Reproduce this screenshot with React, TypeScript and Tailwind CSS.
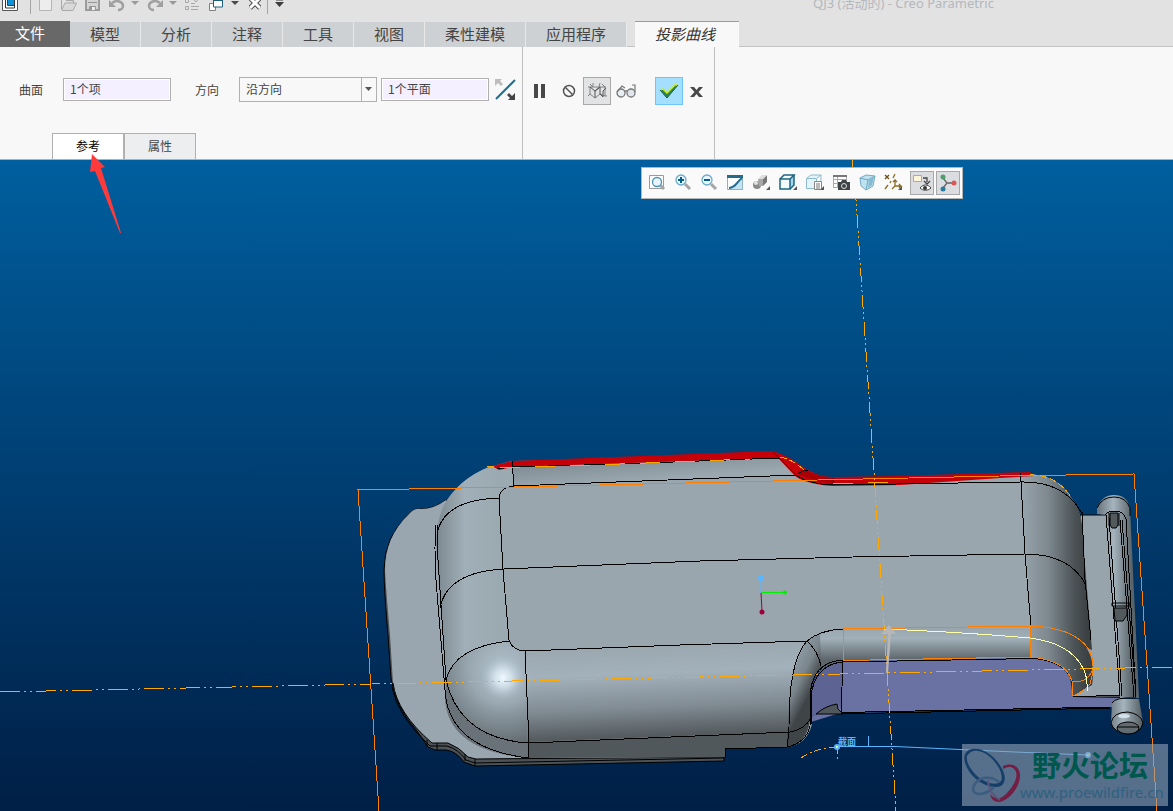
import { useState } from "react";
import type { ReactNode } from "react";

const FONT = "font-['Noto_Sans_CJK_SC','Open_Sans',sans-serif]";

type IconProps = {
    w?: number;
    h?: number;
    children: ReactNode;
};

function Icon({ w = 18, h = 18, children }: IconProps) {
    return (
        <svg
            width={w}
            height={h}
            viewBox={`0 0 ${w} ${h}`}
            fill="none"
            className="shrink-0"
            aria-hidden="true"
        >
            {children}
        </svg>
    );
}

function QuickButton({
    label,
    className = "",
    children,
}: {
    label: string;
    className?: string;
    children: ReactNode;
}) {
    return (
        <button type="button" aria-label={label} className={`block ${className}`}>
            {children}
        </button>
    );
}

function DropMark({ label, className = "", color = "#9a9a9a" }: { label: string; className?: string; color?: string }) {
    return (
        <QuickButton label={label} className={className}>
            <Icon w={8} h={14}>
                <path d="M0 1h8L4 5z" fill={color} />
            </Icon>
        </QuickButton>
    );
}

function TitleBar() {
    return (
        <header className="relative flex h-[21px] items-start overflow-hidden pl-0.5">
            <QuickButton label="窗口">
                <Icon w={16} h={14}>
                    <path d="M.5-3v13.500h15V-3" fill="#fff" stroke="#555" />
                    <path d="M3.500-1v9h9v-9" fill="#fff" stroke="#333" />
                    <path d="M6 0h6v5H6z" fill="#0f93d6" />
                    <path d="M5.500 0v5.500H12" stroke="#0b4f78" />
                </Icon>
            </QuickButton>
            <div className="ml-3 h-[14px] w-px bg-[#a5a5a5]" />
            <QuickButton label="新建" className="ml-2">
                <Icon w={14} h={14}>
                    <path d="M.5-3v13.500h12V-3" fill="#ededed" stroke="#b5b5b5" />
                </Icon>
            </QuickButton>
            <QuickButton label="打开" className="ml-2">
                <Icon w={16} h={14}>
                    <path d="M.5-1v11L4 3h11.500L12 10.500H1M12.500 3V.5H5" fill="#d9d9d9" stroke="#a9a9a9" />
                </Icon>
            </QuickButton>
            <QuickButton label="保存" className="ml-2">
                <Icon w={16} h={14}>
                    <path d="M1-1v11h13V-1" fill="#d4d4d4" stroke="#9c9c9c" strokeWidth="2" />
                    <path d="M4.500 10V6.500h6V10M3 2.500h9" stroke="#959595" fill="#ececec" />
                    <path d="M5 7h2v3H5z" fill="#999" />
                </Icon>
            </QuickButton>
            <QuickButton label="撤消" className="ml-2">
                <Icon w={16} h={14}>
                    <path d="M3 3c5-4 11-1 11 3 0 2-2 4-5 4" stroke="#a0a0a0" strokeWidth="2.500" />
                    <path d="M0 0v7h7z" fill="#a0a0a0" />
                </Icon>
            </QuickButton>
            <DropMark label="撤消列表" className="ml-1.5" />
            <QuickButton label="重做" className="ml-2">
                <Icon w={16} h={14}>
                    <path d="M13 3C8-1 2 2 2 6c0 2 2 4 5 4" stroke="#a0a0a0" strokeWidth="2.500" />
                    <path d="M16 0v7H9z" fill="#a0a0a0" />
                </Icon>
            </QuickButton>
            <DropMark label="重做列表" className="ml-1.5" />
            <QuickButton label="重新生成" className="ml-2">
                <Icon w={16} h={14}>
                    <path d="M.5-.5h3v3h-3zM.5 6.500h3v3h-3z" stroke="#a8a8a8" />
                    <path d="M6 3.500h4M6 6.500h8M6 9.500h7M9 0l2 2 4-5" stroke="#a8a8a8" />
                </Icon>
            </QuickButton>
            <QuickButton label="切换窗口" className="ml-2">
                <Icon w={16} h={14}>
                    <path d="M.5 3.500h6v7h-6z" fill="#fff" stroke="#808080" />
                    <path d="M4.500-1v8h9v-8" fill="#fff" stroke="#1f5f7e" />
                    <path d="M5 0h8" stroke="#1f5f7e" strokeWidth="2" />
                    <path d="M13.500 0v4" stroke="#1f5f7e" />
                </Icon>
            </QuickButton>
            <DropMark label="窗口列表" className="ml-1.5" color="#4a4a4a" />
            <QuickButton label="关闭" className="ml-2.5">
                <Icon w={12} h={14}>
                    <path d="M1 8 11-2M1-2 11 8" stroke="#4f4f4f" strokeWidth="5" />
                    <path d="M1 8 11-2M1-2 11 8" stroke="#fff" strokeWidth="3" />
                </Icon>
            </QuickButton>
            <div className="ml-1.5 h-[14px] w-px bg-[#a5a5a5]" />
            <QuickButton label="自定义" className="ml-[7px]">
                <Icon w={9} h={14}>
                    <path d="M1-1h7v1.500H1zM0 2h9L4.500 7z" fill="#3c3c3c" />
                </Icon>
            </QuickButton>
            <h1 className="absolute -top-[7px] left-[813px] text-[13px] leading-5 text-[#b3b8bd] font-['Noto_Sans','Noto_Sans_CJK_SC',sans-serif] whitespace-nowrap">
                QJ3 (活动的) - Creo Parametric
            </h1>
        </header>
    );
}

const TABS = [
    { label: "模型", wide: false },
    { label: "分析", wide: false },
    { label: "注释", wide: false },
    { label: "工具", wide: false },
    { label: "视图", wide: false },
    { label: "柔性建模", wide: true },
    { label: "应用程序", wide: true },
];

function MenuTabs() {
    return (
        <nav className="flex h-[26px] items-stretch text-[15px] leading-6 text-[#444]">
            <button type="button" className="w-[70px] bg-[#686868] pr-2.5 pb-0.5 text-white">
                文件
            </button>
            {TABS.map((t) => (
                <button
                    key={t.label}
                    type="button"
                    className={`mt-px border-r border-[#e8e8e8] bg-[#cdd1d4] pb-[3px] ${t.wide ? "w-[101px]" : "w-[71px]"}`}
                >
                    {t.label}
                </button>
            ))}
            <div className="w-2 border-b border-[#c3c3c3]" />
            <button
                type="button"
                className="w-[104px] border-t border-[#9a9a9a] bg-[#f8f8f8] pr-1 pb-[3px] text-[#333] italic"
            >
                投影曲线
            </button>
            <div className="flex-1 border-b border-[#c3c3c3]" />
        </nav>
    );
}

function Collector({ label, value }: { label: string; value: string }) {
    return (
        <input
            aria-label={label}
            defaultValue={value}
            className="block h-[23px] w-[108px] border border-[#b0b0b0] bg-[#f4f0ff] px-1.5 pb-0.5 text-[12px] text-[#444] shadow-[inset_0_0_0_1px_#fff] outline-none"
        />
    );
}

function Ribbon() {
    const [tab, setTab] = useState("参考");
    const [direction, setDirection] = useState("沿方向");

    return (
        <section className="flex h-[113px] border-b border-[#b0b0b0] bg-[#f8f8f8] text-[12px] text-[#444]">
            <div className="flex w-[523px] flex-col justify-between border-r border-[#c0c0c0] pt-[30px]">
                <div className="flex h-[25px] items-center pl-[19px]">
                    <span className="w-11">曲面</span>
                    <Collector label="曲面" value="1个项" />
                    <label htmlFor="direction" className="ml-6 w-11">
                        方向
                    </label>
                    <div className="relative h-[25px] w-[138px]">
                        <select
                            id="direction"
                            value={direction}
                            onChange={(e) => setDirection(e.target.value)}
                            className="block h-full w-full appearance-none border border-[#b0b0b0] bg-[#f8f8f8] pb-0.5 pl-1.5 outline-none"
                        >
                            <option>沿方向</option>
                            <option>垂直于曲面</option>
                        </select>
                        <div className="pointer-events-none absolute inset-y-0 right-0 flex w-4 items-center justify-center border-l border-[#b0b0b0] pr-px">
                            <Icon w={8} h={5}>
                                <path d="M0 0h7L3.500 4z" fill="#555" />
                            </Icon>
                        </div>
                    </div>
                    <div className="ml-1">
                        <Collector label="方向参考" value="1个平面" />
                    </div>
                    <button type="button" aria-label="反向" className="ml-1.5">
                        <Icon w={21} h={21}>
                            <path d="M1 20 20 1" stroke="#1f6f8f" strokeWidth="2" />
                            <path d="M0 0h7L5 2l3 3-2 2-3-3-3 3z" fill="#bdbdbd" />
                            <path d="M20 21h-7l2-2-3-3 2-2 3 3 3-3z" fill="#444" />
                        </Icon>
                    </button>
                </div>
                <div className="ml-[52px] flex h-[26px]">
                    {["参考", "属性"].map((t) => (
                        <button
                            key={t}
                            type="button"
                            onClick={() => setTab(t)}
                            className={`w-[72px] border border-b-0 border-[#b0b0b0] pb-0.5 ${
                                tab === t ? "bg-white text-black" : "bg-[#eceef0] text-[#444]"
                            }`}
                        >
                            {t}
                        </button>
                    ))}
                </div>
            </div>
            <div className="flex w-48 items-start border-r border-[#c0c0c0] pt-[30px]">
                <div className="flex h-7 items-center pl-[11px]">
                    <button type="button" aria-label="暂停">
                        <Icon w={12} h={14}>
                            <path d="M0 0h4v14H0zM7 0h4v14H7z" fill="#484848" />
                        </Icon>
                    </button>
                    <button type="button" aria-label="无预览" className="ml-4">
                        <Icon w={14} h={14}>
                            <circle cx="7" cy="7" r="5.500" stroke="#555" strokeWidth="1.500" />
                            <path d="m3.500 3.500 7 7" stroke="#555" strokeWidth="1.500" />
                        </Icon>
                    </button>
                    <button
                        type="button"
                        aria-label="分离预览"
                        className="ml-[7px] flex size-7 items-center justify-center border border-[#a8a8a8] bg-[#e2e3e4]"
                    >
                        <Icon w={20} h={20}>
                            <path
                                d="M1 6h6M6 2v3M3 6v7l-2 2M3 13l5 4M13 6h6M13 2l-1 4M18 6v9l-5-2M18 15h2M8 17l5-4M7 6h5M15 3l3 3M3 3l3 3"
                                stroke="#808080"
                            />
                            <path d="M3 6l5 4v7M8 10l5-4v7M13 6l-5 4M13 13l3 3v-6l3-3" stroke="#555" />
                        </Icon>
                    </button>
                    <button type="button" aria-label="预览" className="ml-[5px]">
                        <Icon w={20} h={16}>
                            <circle cx="5" cy="10" r="4" fill="#e8eef2" stroke="#777" strokeWidth="1.300" />
                            <circle cx="15" cy="10" r="4" fill="#dfe7ec" stroke="#777" strokeWidth="1.300" />
                            <path d="M9 9c0-2 2-2 2 0M1 9l5-6 3 2M19 9V2h-3" stroke="#777" strokeWidth="1.200" />
                        </Icon>
                    </button>
                    <button
                        type="button"
                        aria-label="确定"
                        className="ml-[19px] flex size-7 items-center justify-center border border-[#6ec6f5] bg-[#a5dfff]"
                    >
                        <Icon w={20} h={16}>
                            <path d="M1 7l3-1 4 4 8-8h3L8 15z" fill="#2c8457" />
                            <path d="m1 7 3-1 4 4 8-8h3" stroke="#d0f000" strokeWidth="1.500" />
                            <path d="m1 7 7 8L19 2" stroke="#23603f" strokeWidth="1" />
                        </Icon>
                    </button>
                    <button type="button" aria-label="取消" className="mt-0.5 ml-[7px]">
                        <Icon w={13} h={12}>
                            <path d="M0 1h4l2.500 3L9 1h4L8.500 6l4.500 5H9L6.500 8 4 11H0l4.500-5z" fill="#484848" />
                        </Icon>
                    </button>
                </div>
            </div>
        </section>
    );
}

const CORNER = <path d="M19 14v4h-4z" fill="#555" />;

function ViewToolbar() {
    const button = "flex h-6 w-[26px] items-center justify-center pb-0.5";
    const pressed = "flex size-6 items-center justify-center border border-[#a8a8a8] bg-[#dcdde0]";
    return (
        <div
            role="toolbar"
            aria-label="视图工具栏"
            className="absolute top-[7px] left-[641px] flex h-8 items-center border border-[#b5b5b5] bg-[#fafafa] px-0.5"
        >
            <button type="button" aria-label="重新调整" className={button}>
                <Icon w={20} h={20}>
                    <path d="M2.500 3.500h14v13h-14z" fill="#fff" stroke="#9b9b9b" />
                    <path d="m13 13 4 4" stroke="#a5a5a5" strokeWidth="3" />
                    <circle cx="10" cy="10" r="4.500" fill="#e9f6ff" stroke="#4d93b3" strokeWidth="1.300" />
                </Icon>
            </button>
            <button type="button" aria-label="放大" className={button}>
                <Icon w={20} h={20}>
                    <path d="m12 12 5 5" stroke="#a5a5a5" strokeWidth="3" />
                    <circle cx="8" cy="8" r="5" fill="#e9f6ff" stroke="#6fabc6" strokeWidth="1.300" />
                    <path d="M5 8h6M8 5v6" stroke="#00608b" strokeWidth="2" />
                </Icon>
            </button>
            <button type="button" aria-label="缩小" className={button}>
                <Icon w={20} h={20}>
                    <path d="m12 12 5 5" stroke="#a5a5a5" strokeWidth="3" />
                    <circle cx="8" cy="8" r="5" fill="#e9f6ff" stroke="#6fabc6" strokeWidth="1.300" />
                    <path d="M5 8h6" stroke="#00608b" strokeWidth="2" />
                </Icon>
            </button>
            <button type="button" aria-label="重画" className={button}>
                <Icon w={20} h={20}>
                    <path d="M2.500 3.500h15v14h-15z" fill="#c2e4f3" stroke="#8db1c3" />
                    <path d="M3 5h13C11 11 10 16 3 17z" fill="#fff" />
                    <path d="M2 4.500h16" stroke="#246b8c" strokeWidth="3" />
                    <path d="M4 16c8-1 7-6 13-10" stroke="#246b8c" strokeWidth="2" />
                </Icon>
            </button>
            <button type="button" aria-label="渲染" className={button}>
                <Icon w={20} h={20}>
                    <circle cx="6" cy="13" r="4" fill="#8a8a8a" />
                    <path d="M12 7l4-4v7l-4 4z" fill="#777" />
                    <path d="M7 7h5v7H8z" fill="#a8a8a8" />
                    <path d="M7 7l4-4h5l-4 4z" fill="#ddd" />
                    <circle cx="5" cy="11" r="2" fill="#e2e2e2" />
                    {CORNER}
                </Icon>
            </button>
            <button type="button" aria-label="显示样式" className={`ml-px ${button}`}>
                <Icon w={20} h={20}>
                    <path d="M12 7l4-4v10l-4 4z" fill="#a9d5e8" />
                    <path d="M2 7h10v10H2zM2 7l4-4h10l-4 4" fill="#f4fbff" stroke="#1d6683" strokeWidth="1.500" />
                    <path d="M16 3v10l-4 4" stroke="#1d6683" strokeWidth="1.500" />
                    {CORNER}
                </Icon>
            </button>
            <button type="button" aria-label="已保存方向" className={`ml-px ${button}`}>
                <Icon w={20} h={20}>
                    <path d="M1.500 6.500h10v10h-10zM2 6l4-3h10l-4 3M16 3v9" fill="#e4f4fb" stroke="#8fbccd" />
                    <path d="M9.500 9.500h7v8h-7z" fill="#fff" stroke="#888" />
                    <path d="M11 12h4M11 14h4M11 16h4" stroke="#777" />
                    {CORNER}
                </Icon>
            </button>
            <button type="button" aria-label="视图管理器" className={button}>
                <Icon w={20} h={20}>
                    <path d="M2.500 3.500h13v12h-13zM2 7.500h13M2 11.500h13M6.500 4v12" fill="#fff" stroke="#aaa" />
                    <path d="M2 4h14" stroke="#777" strokeWidth="2" />
                    <path d="M7 10h3l1-2h4l1 2h3v8H7z" fill="#3f4447" />
                    <circle cx="13" cy="14" r="2.500" stroke="#ddd" />
                </Icon>
            </button>
            <button type="button" aria-label="透视图" className={button}>
                <Icon w={20} h={20}>
                    <path d="M3 6l6-3 9 1-2 10-7 4-5-4z" fill="#bfe2f0" stroke="#7aa9bf" />
                    <path d="m3 6 8 2 7-4M11 8l-2 10" stroke="#6aa9c3" />
                    <path d="m12 8 5-3-2 8-4 3z" fill="#86bcd2" />
                </Icon>
            </button>
            <button type="button" aria-label="基准显示" className={button}>
                <Icon w={20} h={20}>
                    <path d="m2 3 4 4M6 3 2 7" stroke="#6a5319" strokeWidth="1.300" />
                    <path d="m12 2-2 4M8 9l-1 2M5 13l-3 4M12 9v5l-3 3M12 14h6l-2-2m2 2-2 2M10 10l2-2 2 2" stroke="#8d6b20" strokeWidth="1.300" />
                    {CORNER}
                </Icon>
            </button>
            <button type="button" aria-label="注释显示" className={`ml-1 ${pressed}`}>
                <Icon w={20} h={20}>
                    <path d="M1.500 2.500h8v6h-8z" fill="#fff4dc" stroke="#b6a992" />
                    <path d="M11 5h4v4m-3-1 3 3 3-3" stroke="#444" strokeWidth="1.300" />
                    <path d="M8 15c3-4 8-4 11 0-3 3-8 3-11 0z" fill="#fff" stroke="#444" />
                    <circle cx="13" cy="15" r="2" fill="#333" />
                </Icon>
            </button>
            <button type="button" aria-label="旋转中心" className={`ml-0.5 ${pressed}`}>
                <Icon w={20} h={20}>
                    <path d="m5 5 4 5h7M9 10l-4 5" stroke="#666" strokeWidth="1.300" />
                    <circle cx="5" cy="4" r="2.500" fill="#4f9e6c" />
                    <circle cx="16" cy="10" r="2.500" fill="#d85757" />
                    <circle cx="5" cy="16" r="2.500" fill="#287b9e" />
                </Icon>
            </button>
        </div>
    );
}

function Model() {
    return (
        <svg
            viewBox="0 160 1173 651"
            preserveAspectRatio="xMinYMin slice"
            className="absolute inset-0 size-full overflow-visible"
            fill="none"
            role="img"
            aria-label="QJ3"
        >
            <defs>
                <linearGradient id="left" x1="435" y1="0" x2="500" y2="0" gradientUnits="userSpaceOnUse">
                    <stop offset="0" stopColor="#7a868d" />
                    <stop offset=".45" stopColor="#a1afb8" />
                    <stop offset="1" stopColor="#9ba9b1" />
                </linearGradient>
                <linearGradient id="top" x1="600" y1="458" x2="602" y2="484" gradientUnits="userSpaceOnUse">
                    <stop offset="0" stopColor="#7f8b92" />
                    <stop offset="1" stopColor="#9ba8b0" />
                </linearGradient>
                <linearGradient id="front" x1="660" y1="644" x2="664" y2="740" gradientUnits="userSpaceOnUse">
                    <stop offset="0" stopColor="#9aa7af" />
                    <stop offset=".3" stopColor="#a3b1bb" />
                    <stop offset=".65" stopColor="#818c94" />
                    <stop offset="1" stopColor="#4d5356" />
                </linearGradient>
                <linearGradient id="right" x1="1022" y1="0" x2="1088" y2="0" gradientUnits="userSpaceOnUse">
                    <stop offset="0" stopColor="#98a4ac" />
                    <stop offset=".4" stopColor="#7d888f" />
                    <stop offset=".8" stopColor="#4b5255" />
                    <stop offset="1" stopColor="#3b4042" />
                </linearGradient>
                <linearGradient id="lip" x1="0" y1="627" x2="0" y2="660" gradientUnits="userSpaceOnUse">
                    <stop offset="0" stopColor="#97a4ac" />
                    <stop offset=".35" stopColor="#a1b0b9" />
                    <stop offset="1" stopColor="#5c6469" />
                </linearGradient>
                <linearGradient id="bend" x1="788" y1="670" x2="815" y2="684" gradientUnits="userSpaceOnUse">
                    <stop offset="0" stopColor="#8f9ca4" />
                    <stop offset=".5" stopColor="#7a858c" />
                    <stop offset="1" stopColor="#3f4446" />
                </linearGradient>
                <radialGradient id="shine" cx="503" cy="678" r="36" gradientUnits="userSpaceOnUse">
                    <stop offset="0" stopColor="#f0faff" />
                    <stop offset=".25" stopColor="#d5e4ee" stopOpacity=".85" />
                    <stop offset=".6" stopColor="#a9b9c4" stopOpacity=".3" />
                    <stop offset="1" stopColor="#9caab3" stopOpacity="0" />
                </radialGradient>
                <radialGradient id="ball" cx="503" cy="668" r="88" gradientUnits="userSpaceOnUse">
                    <stop offset="0" stopColor="#b0c0ca" />
                    <stop offset=".4" stopColor="#98a6af" />
                    <stop offset=".8" stopColor="#6b757b" />
                    <stop offset="1" stopColor="#535b5f" />
                </radialGradient>
                <linearGradient id="rod" x1="1098" y1="0" x2="1132" y2="0" gradientUnits="userSpaceOnUse">
                    <stop offset="0" stopColor="#6c787f" />
                    <stop offset=".45" stopColor="#a5b4be" />
                    <stop offset="1" stopColor="#596368" />
                </linearGradient>
                <linearGradient id="knob" x1="1110" y1="0" x2="1144" y2="0" gradientUnits="userSpaceOnUse">
                    <stop offset="0" stopColor="#717d84" />
                    <stop offset=".4" stopColor="#a5b4be" />
                    <stop offset="1" stopColor="#4d5559" />
                </linearGradient>
            </defs>

            {/* base plate */}
            <path
                d="M446 500Q434 509 421 509Q414 508 409 514Q384 537 384 570Q384 590 388 635L391 678Q394 705 417 731L428 747L435 750H446Q456 751 464 762L475 766L724 761V750L500 690Z"
                fill="#4c5255"
                stroke="#000"
            />
            <path
                d="M446 500Q434 509 421 509Q414 508 409 514Q385 537 385 570Q386 590 390 635L393 683Q397 713 432 743H448Q459 747 468 757L476 759L530 758L500 680Z"
                fill="#9aa6af"
            />
            <path
                d="M393 683Q397 713 432 743H448Q459 747 468 757L476 759L724 757M392 687Q397 716 430 746H447Q458 749 466 760L475 763L724 758M427 740v7M437 743v7M465 754v7M475 759v7"
                stroke="#000"
            />
            {/* rear plate on the right */}
            <path d="M1080 515h28l13 182h-48z" fill="#98a4ac" stroke="#000" />

            {/* housing silhouette */}
            <path
                d="M436 545Q436 522 444 505Q459 479 489 467L497 465L512 461L773 457Q785 456 794 467Q806 483 833 484L1026 474Q1055 474 1070 496Q1083 512 1083 540L1092 660V690L1073 697V680Q1066 660 1035 658L843 661Q818 664 812 684V724Q807 744 788 747L725 749V757L528 758Q457 749 446 700Z"
                fill="#99a6ae"
            />
            <path d="M436 545Q436 522 444 505Q459 479 489 467L512 465L514 486Q500 487 499 498L509 640L446 675Z" fill="url(#left)" />
            <path d="M512 464L775 457L796 475L514 486Z" fill="url(#top)" />
            <path d="M524 651L807 641Q790 665 789 732L528 742Z" fill="url(#front)" />
            <path d="M528 742L789 732L787 747L725 749V757L528 758Z" fill="#51585b" />
            <path d="M446 680Q454 647 509 641Q513 650 524 651L528 743Q462 739 446 680Z" fill="url(#ball)" />
            <path d="M446 680Q462 739 528 743V758Q449 751 445 700Z" fill="#687278" />
            <circle cx="500" cy="680" r="42" fill="url(#shine)" />
            <path d="M1021 475Q1058 473 1071 497Q1083 512 1083 540L1092 650L1031 627Z" fill="url(#right)" />
            <path d="M843 629L1030 627V657L843 661Z" fill="url(#lip)" />
            <path d="M1030 627Q1070 627 1085 646Q1096 660 1092 685L1073 696V680Q1064 660 1030 657Z" fill="url(#right)" />
            <path
                d="M807 641Q820 630 843 629V661Q818 663 812 684L810 720Q807 744 787 747Q788 665 807 641Z"
                fill="url(#bend)"
            />
            <path d="M820 634Q830 629 843 629V661Q828 662 821 667Z" fill="url(#lip)" />

            {/* pocket */}
            <path d="M843 661L1034 658Q1061 662 1070 677L1073 697L1121 698L1115 707L840 713L811 722V690Q818 663 843 661Z" fill="#6a72a3" />
            <path d="M811 690Q818 663 843 661L841 709L838 704L811 718Z" fill="#5d6493" />
            <path d="M816 714Q825 706 837 704L838 709L843 714Z" fill="#51585b" stroke="#000" />
            <path d="M1073 697l47-2M841 712.500L1111 707M841 714L1111 708M843 661L841 713M811 725L812 690Q818 664 843 662L1034 658.500Q1064 661 1072 680" stroke="#000" shapeRendering="crispEdges" />

            {/* highlighted red faces */}
            <path
                d="M492 466L512 461L773 451Q789 456 803 467Q818 477 833 477L900 476L1030 472L1034 476L1000 478L900 485L833 486Q806 484 795 476L778 458L512 467L499 470Z"
                fill="#c50008"
            />
            <path d="M803 469Q818 477 833 478L833 483Q808 480 797 473Z" fill="#a90006" />

            {/* housing edges */}
            <g stroke="#000" shapeRendering="crispEdges">
                <path d="M512 461L514 486M497 469L512 467L620 464L779 458M773 452L796 475M798 474Q803 470 808 470M833 478v7M1020 473L1021 482" />
                <path d="M514 486L796 475Q808 484 833 485L1021 482Q1065 481 1082 514" />
                <path d="M514 486Q500 487 499 498L503 570L509 640Q513 651 525 651L680 645L807 641" />
                <path d="M438 530Q446 500 499 498M440 608Q447 572 504 569L700 561L853 557L1025 554Q1070 554 1086 585M446 680Q454 647 509 641" />
                <path d="M436 525Q434 545 436 580L445 690Q448 748 528 758L529 743L525 651M438 525L437 545L446 680Q460 739 529 743L790 732Q804 730 811 718" />
                <path d="M1021 482L1025 554L1031 627M1082 512L1085 580L1091 640" />
                <path d="M807 641Q820 630 843 629M807 641Q818 651 821 666M807 641Q788 661 789 732L787 747Q806 743 810 726" />
                <path d="M810 724V700Q810 662 843 660M725 757V749L787 747" />
            </g>

            {/* hinge rod */}
            <path d="M1097 514V508Q1102 495 1114 495Q1127 495 1130 508L1139 698H1120L1107 515Z" fill="url(#rod)" />
            <path d="M1097 508Q1102 497 1114 497Q1126 497 1130 508L1130 516" stroke="#000" />
            <path
                d="M1106 515L1120 696M1109 518L1122 696M1105 515Q1108 511 1114 511Q1124 511 1126 519L1136 697M1120 520L1134 697M1122 520L1136 697"
                stroke="#000"
                shapeRendering="crispEdges"
            />
            <path d="M1110 513h8v12l-2 3h-4l-2-3zM1114 608h13v7l-4 6h-8z" fill="#525a5e" stroke="#000" />
            <path d="M1112 603h18v3h-18zM1109 513v13M1119 513v13" stroke="#000" />
            <path d="M1112 703Q1115 697 1125 699H1139L1143 722Q1142 732 1128 734Q1113 732 1111 723Z" fill="url(#knob)" />
            <path d="M1111 723Q1113 712 1128 712Q1141 714 1143 723Q1141 733 1128 734Q1113 732 1111 723ZM1112 703Q1115 697 1136 698" stroke="#000" />
            <ellipse cx="1128" cy="728" rx="11" ry="6" fill="#626b70" stroke="#000" />
            <path d="M1117 727h22" stroke="#000" />
            <ellipse cx="1124" cy="716" rx="6" ry="2" fill="#d4e0e8" />

            {/* datum plane and picked surface */}
            <g stroke="#ff8000" shapeRendering="crispEdges">
                <path d="M379 811L358 490L514 487L795 480.500L1000 476L1134 474L1157 811" />
                <path d="M843 629V661M843 629L1030 626V657L843 660.500M1030 626Q1072 627 1088 648Q1097 663 1090 684Q1083 692 1073 696L1072 681Q1088 684 1093 668" />
                <path d="M1030 657Q1066 660 1072 681" />
            </g>

            {/* datum axes */}
            <g stroke="#ffa800" shapeRendering="crispEdges">
                <path d="M852 160L856 200L884 625L896 811" strokeDasharray="14 3 2 3 2 3" />
                <path d="M0 692L372 684L887 673L1173 667" strokeDasharray="20 4 2 4 2 4" />
                <path d="M487 467L494 466M780 457Q792 459 804 470M1030 475Q1055 474 1071 497" strokeDasharray="7 3" />
                <path d="M500 468L620 464L750 459M833 484L900 482" strokeDasharray="20 15" />
                <path d="M801 758Q815 748 837 747M837 747V762" strokeDasharray="7 3 2 3" />
            </g>
            <path d="M884 629Q960 632 1030 638Q1070 643 1083 668Q1088 678 1087 691" stroke="#ffffa8" shapeRendering="crispEdges" />
            <path d="M886 673L888 634H881L889 625L896 634L891 634L888 673Z" fill="#b7b7b7" />

            {/* spin center */}
            <path d="M761 579V593" stroke="#58b6ff" />
            <path d="M761 592.500H785" stroke="#00f000" />
            <path d="M761 593L762 611" stroke="#a0003c" />
            <circle cx="761" cy="578" r="3" fill="#58b6ff" />
            <circle cx="785" cy="592.500" r="2" fill="#00f000" />
            <circle cx="762" cy="612" r="2.500" fill="#a0003c" />

            {/* sketched curve */}
            <path d="M837 746.500H895L1015 752L1088 755M868.500 736V746" stroke="#58b6ff" />
            <circle cx="837" cy="747" r="3" fill="#58b6ff" />
            <circle cx="837" cy="747" r="1" fill="#ffff70" />
            <circle cx="1088" cy="755" r="3" fill="#58b6ff" />
            <circle cx="1088" cy="755" r="1" fill="#ffff70" />
            <text x="838" y="745" fontSize="9" fontWeight="700" fill="#58b6ff">
                截面
            </text>

            {/* pointer */}
            <path d="M92 154L105 167L101 168L121 233L120 233L95 171L90 172Z" fill="#ff3a3a" />
        </svg>
    );
}

function Watermark() {
    return (
        <div className="absolute right-[5px] bottom-[5px] flex h-[62px] w-[206px] bg-[#8fa3b8]/60">
            <svg width="60" height="62" viewBox="0 0 60 62" fill="none" className="shrink-0" aria-hidden="true">
                <path
                    fillRule="evenodd"
                    d="M3 10C7 2 22 3 33 15C43 26 46 37 39 42C32 45 18 41 9 30C3 22 1 15 3 10ZM5 12C4 18 8 25 14 31C24 40 35 42 39 37C42 31 36 20 28 13C19 5 9 5 5 12Z"
                    fill="#173e69"
                />
                <path
                    fillRule="evenodd"
                    d="M41 22C50 18 57 22 58 30C59 42 47 57 37 58C31 58 29 54 28 50C33 56 39 56 45 49C54 40 57 29 52 25C49 22 45 23 41 25Z"
                    fill="#731f44"
                />
                <path d="M37 38C29 31 17 33 13 40C9 46 12 50 17 50C23 50 29 46 32 43" stroke="#3c5c80" strokeWidth="2.500" />
                <path d="M26 36Q26 49 38 56" stroke="#56597c" strokeWidth="2" />
            </svg>
            <div className="flex flex-col">
                <div className="pt-0.5 pl-2.5 text-[29px] leading-9 font-bold whitespace-nowrap text-[#00574e]">
                    野火论坛
                </div>
                <a
                    href="#"
                    className="-ml-0.5 font-['Noto_Sans',sans-serif] text-[15px] leading-5 text-[#2f6180]"
                >
                    www.proewildfire.cn
                </a>
            </div>
        </div>
    );
}

export default function App() {
    return (
        <div className={`flex min-h-screen flex-col overflow-hidden bg-[#e2e2e2] ${FONT}`}>
            <TitleBar />
            <MenuTabs />
            <Ribbon />
            <main className="relative flex-1 bg-linear-to-b from-[#005f9f] to-[#001f46]">
                <Model />
                <ViewToolbar />
                <Watermark />
            </main>
        </div>
    );
}
